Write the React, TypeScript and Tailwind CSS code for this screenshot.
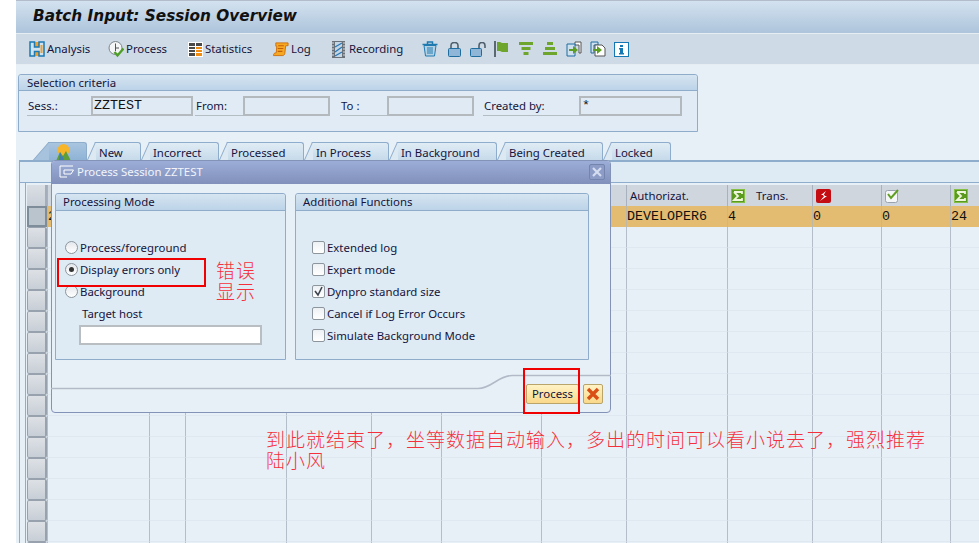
import type { ReactNode } from "react";

const columns = [
  { w: "w-[102px]" },
  { w: "w-[36px]" },
  { w: "w-[101px]" },
  { w: "w-[85px]" },
  { w: "w-[70px]" },
  { w: "w-[100px]" },
  { w: "w-[85px]" },
  { w: "w-[101px]", head: "Authorizat.", val: "DEVELOPER6" },
  { w: "w-[85px]", head: "Trans.", val: "4", icon: "sum" },
  { w: "w-[69px]", val: "0", icon: "err" },
  { w: "w-[69px]", val: "0", icon: "ok" },
  { w: "w-[40px]", val: "24", icon: "sum", clipped: true },
];

function SumIcon() {
  return (
    <svg width="14" height="14" viewBox="0 0 14 14" className="shrink-0">
      <rect x="0" y="0" width="14" height="14" fill="#5a9a1e" />
      <rect x="0.5" y="0.5" width="13" height="13" fill="none" stroke="#86bf45" />
      <path d="M3 3h8v2M3 3l4 4-4 4h8V9" fill="none" stroke="#eef6dc" strokeWidth="1.8" />
    </svg>
  );
}

function ErrIcon() {
  return (
    <svg width="15" height="14" viewBox="0 0 15 14" className="shrink-0">
      <rect width="15" height="14" rx="2" fill="#c40d12" />
      <path d="M10 2 5 6h4L4 12l7-5H7z" fill="#fff" />
    </svg>
  );
}

function OkIcon() {
  return (
    <svg width="15" height="15" viewBox="0 0 15 15" className="shrink-0">
      <rect x="0.5" y="2.5" width="12" height="12" rx="2" fill="#f4f6f8" stroke="#9aa3ad" />
      <path d="M3 6l3 4 7-8" fill="none" stroke="#5f9e22" strokeWidth="2" />
    </svg>
  );
}

function AnalysisIcon() {
  return (
    <svg width="16" height="16" viewBox="0 0 16 16" className="shrink-0">
      <rect x="1" y="1" width="14" height="14" fill="#f2a02c" />
      <path d="M1 1h4.500v5H10V1h5v14h-5v-4.500H5.500V15H1z" fill="#cfe2f0" stroke="#1b79b4" strokeWidth="1.500" />
      <path d="M11.500 4h2v8h-2z" fill="#f2a02c" />
    </svg>
  );
}

function ClockIcon() {
  return (
    <svg width="16" height="17" viewBox="0 0 16 17" className="shrink-0">
      <circle cx="7.500" cy="7" r="6.500" fill="#f3f5f7" stroke="#7d858d" />
      <path d="M7.500 2.500V7H11M7.500 7v3" fill="none" stroke="#555" />
      <path d="M6.500 11l3 3.500 6-7" fill="none" stroke="#4f9e28" strokeWidth="2.400" />
    </svg>
  );
}

function StatsIcon() {
  return (
    <svg width="15" height="15" viewBox="0 0 15 15" className="shrink-0">
      <rect width="15" height="15" fill="#fff" />
      <path d="M1 1h6v3H1zM1 5h6v2H1zM1 8h6v2H1zM1 11h6v3H1z" fill="#4a4a4a" />
      <path d="M8 1h6v3H8z" fill="#4a4a4a" />
      <path d="M8 5h6v2H8zM8 8h6v2H8zM8 11h6v3H8z" fill="#f08c10" />
    </svg>
  );
}

function LogIcon() {
  return (
    <svg width="16" height="16" viewBox="0 0 17 16" className="shrink-0">
      <path d="M3 1.500h13v3h-2.500l-1 8.500c-.5 1.500-1.500 2-2 2H.500c0-2 1-3 3-3l.500-7H3z" fill="#f7a823" stroke="#d0700a" />
      <path d="M5.500 4.500h6M5 7.500h6M5 10.500h5" stroke="#c2600a" strokeWidth="1.200" />
    </svg>
  );
}

function FilmIcon() {
  return (
    <svg width="15" height="17" viewBox="0 0 15 17" className="shrink-0">
      <rect width="13" height="17" fill="#6a7178" />
      <path d="M1 1v15M12 1v15" stroke="#d5dbe0" strokeDasharray="2 1" />
      <rect x="3" y="1" width="7" height="15" fill="#c5d6e4" />
      <path d="M3 6l7-4M3 11l7-5M3 15l7-4" stroke="#2a7ab8" strokeWidth="1.4" />
    </svg>
  );
}

function TrashIcon() {
  return (
    <svg width="16" height="16" viewBox="0 0 16 16" className="shrink-0">
      <path d="M.500 3.500h15M5.500 3V1h5v2" fill="none" stroke="#1f7ab0" strokeWidth="1.500" />
      <path d="M2 4.500h12L12.500 15h-9z" fill="#b6d0e4" stroke="#1f7ab0" />
      <path d="M6 6v7M8 6v7M10 6v7" stroke="#1f7ab0" />
    </svg>
  );
}

function LockIcon({ open }: { open?: boolean }) {
  return (
    <svg width={open ? 16 : 13} height="15" viewBox={open ? "0 0 16 15" : "0 0 13 15"} className="shrink-0">
      <path d={open ? "M9 6V3.500a3 3 0 0 1 6 0V6" : "M3 7V3.500a3.500 3 0 0 1 7 0V7"} fill="none" stroke="#4f5f6d" strokeWidth="1.600" />
      <rect x="0.500" y="6.500" width={open ? 11 : 12} height="8" rx="1" fill="#8fb6d6" stroke="#1f6d9f" />
    </svg>
  );
}

function FlagIcon() {
  return (
    <svg width="15" height="16" viewBox="0 0 15 16" className="shrink-0">
      <rect x="0" y="0" width="2" height="16" fill="#5a6a70" />
      <path d="M3 1h3l2 1h6v9H8L6 10H3z" fill="#6da52d" />
    </svg>
  );
}

function FilterIcon() {
  return (
    <svg width="14" height="14" viewBox="0 0 14 14" className="shrink-0">
      <rect x="0" y="0" width="14" height="3" fill="#6da52d" />
      <rect x="2.500" y="5" width="9" height="3" fill="#6da52d" />
      <rect x="4.500" y="10" width="5" height="3" fill="#6da52d" />
    </svg>
  );
}

function StackIcon() {
  return (
    <svg width="14" height="14" viewBox="0 0 14 14" className="shrink-0">
      <rect x="4" y="0" width="6" height="3" fill="#6da52d" />
      <rect x="2" y="5" width="10" height="3" fill="#6da52d" />
      <rect x="0" y="10" width="14" height="3" fill="#6da52d" />
    </svg>
  );
}

function TransferIcon({ flip }: { flip?: boolean }) {
  return (
    <svg width="16" height="16" viewBox="0 0 16 16" className="shrink-0">
      <path d={flip ? "M1 1h7v3H4v8H1z" : "M9 1h6v11h-2V4H9z"} fill={flip ? "#cfe0ee" : "#fff"} stroke={flip ? "#1f6d9f" : "#555"} />
      <path d={flip ? "M8 4h4l3 3v8H5V4z" : "M1 3h8v12H1z"} fill={flip ? "#fff" : "#cfe0ee"} stroke={flip ? "#555" : "#1f6d9f"} />
      <path d="M3 8h4V5l5 4-5 4v-3H3z" fill="#5d9e22" />
    </svg>
  );
}

function InfoIcon() {
  return (
    <svg width="15" height="15" viewBox="0 0 15 15" className="shrink-0">
      <rect x="0.500" y="0.500" width="14" height="14" fill="#fff" stroke="#1478b4" />
      <path d="M6 3h3v2H6zM5 6h4v5h1v1.500H5V11h1V7.500H5z" fill="#1478b4" />
    </svg>
  );
}

function MountainIcon() {
  return (
    <svg width="15" height="18" viewBox="0 0 15 18" className="shrink-0">
      <circle cx="7.500" cy="6" r="6" fill="#f7b52a" />
      <path d="M0 17 4 8l3 4 3-5 5 10z" fill="#5f9e3a" />
      <path d="M4 8l2 5 1-1 1 5H3z" fill="#3f7fae" />
    </svg>
  );
}

function CloseXIcon() {
  return (
    <svg width="14" height="14" viewBox="0 0 14 14">
      <path d="M2 2l10 10M12 2 2 12" stroke="#d94f16" strokeWidth="3.4" />
    </svg>
  );
}

function WindowIcon() {
  return (
    <svg width="15" height="13" viewBox="0 0 15 13" className="shrink-0">
      <path d="M14 1H1v11h7M14.500 5H5v4h7z" fill="none" stroke="#fff" strokeWidth="1" />
    </svg>
  );
}

const toolbarText = [
  { label: "Analysis", w: "w-[79px]", icon: <AnalysisIcon /> },
  { label: "Process", w: "w-[80px]", icon: <ClockIcon /> },
  { label: "Statistics", w: "w-[85px]", icon: <StatsIcon /> },
  { label: "Log", w: "w-[59px]", icon: <LogIcon /> },
  { label: "Recording", w: "w-[90px]", icon: <FilmIcon /> },
];

const toolbarIcons = [
  { w: "w-[26px]", icon: <TrashIcon /> },
  { w: "w-[22px]", icon: <LockIcon /> },
  { w: "w-[24px]", icon: <LockIcon open /> },
  { w: "w-[25px]", icon: <FlagIcon /> },
  { w: "w-[24px]", icon: <FilterIcon /> },
  { w: "w-[23px]", icon: <StackIcon /> },
  { w: "w-[24px]", icon: <TransferIcon /> },
  { w: "w-[24px]", icon: <TransferIcon flip /> },
  { w: "w-[24px]", icon: <InfoIcon /> },
];

const tabs = [
  { label: "New", w: "w-[54px]" },
  { label: "Incorrect", w: "w-[78px]" },
  { label: "Processed", w: "w-[85px]" },
  { label: "In Process", w: "w-[85px]" },
  { label: "In Background", w: "w-[108px]" },
  { label: "Being Created", w: "w-[106px]" },
  { label: "Locked", w: "w-[68px]" },
];

function Tab({ label, w }: { label: string; w: string }) {
  return (
    <div className={`relative h-[18px] ${w}`}>
      <div className="absolute bottom-0 left-0 top-0 w-[12px] origin-bottom-left -skew-x-[24deg] border-l border-t border-[#8eaccb] bg-[#dce9f3]" />
      <div className="absolute bottom-0 left-[9px] right-0 top-0 rounded-tr-[3px] border-r border-t border-[#8eaccb] bg-gradient-to-b from-[#e0ecf5] to-[#c6daea]" />
      <span className="absolute left-[12px] top-[5px] whitespace-nowrap text-[#14143c]">{label}</span>
    </div>
  );
}

function GroupBox({ title, className, children }: { title: string; className: string; children: ReactNode }) {
  return (
    <div className={`rounded-t-[3px] border border-[#8fadcb] bg-[#deeaf4] ${className}`}>
      <div className="flex h-[17px] items-center rounded-t-[3px] border-b border-[#8fadcb] bg-gradient-to-b from-[#d6e5f1] to-[#bcd3e8] pl-[7px] text-[#14143c]">
        {title}
      </div>
      {children}
    </div>
  );
}

function Field({ label, lw, w, value, ml }: { label: string; lw: string; w: string; value?: string; ml: string }) {
  return (
    <div className={`flex h-[20px] ${ml}`}>
      <div className={`flex items-center border-b border-[#b4bcc4] pl-[1px] pt-[1px] text-[#14143c] ${lw}`}>{label}</div>
      <div className={`flex items-center border-2 border-[#b4b9bd] bg-[#dfeaf4] pl-[1px] font-['Liberation_Mono',monospace] text-[13.33px] text-[#111] ${w}`}>
        {value}
      </div>
    </div>
  );
}

function Radio({ label, checked }: { label: string; checked?: boolean }) {
  return (
    <div className="flex h-[22px] items-center gap-[2px] pl-[9px] text-[#14143c]">
      <span className="flex h-[13px] w-[13px] items-center justify-center rounded-full border border-[#8d959d] bg-gradient-to-b from-[#e4e8ec] to-white">
        {checked && <span className="h-[5px] w-[5px] rounded-full bg-[#333]" />}
      </span>
      <span className="pt-[1px]">{label}</span>
    </div>
  );
}

function Check({ label, checked }: { label: string; checked?: boolean }) {
  return (
    <div className="flex h-[22px] items-center gap-[2px] pl-[16px] text-[#14143c]">
      <span className="flex h-[13px] w-[13px] items-center justify-center rounded-[2px] border border-[#8d959d] bg-gradient-to-b from-[#eef1f4] to-white">
        {checked && (
          <svg width="11" height="11" viewBox="0 0 11 11">
            <path d="M2 5l3 4 4-8" fill="none" stroke="#3c4450" strokeWidth="1.6" />
          </svg>
        )}
      </span>
      <span className="pt-[1px]">{label}</span>
    </div>
  );
}

function HeadIcon({ name }: { name?: string }) {
  if (name === "sum") return <SumIcon />;
  if (name === "err") return <ErrIcon />;
  if (name === "ok") return <OkIcon />;
  return null;
}

export default function App() {
  const emptyRows = Array.from({ length: 16 });

  return (
    <div className="relative flex h-[543px] w-[979px] overflow-hidden bg-white font-['Noto_Sans',sans-serif] text-[11.400px] leading-none">
      <div className="w-[16px] shrink-0" />
      <div className="flex min-w-0 flex-1 flex-col bg-[#e8f0f7]">
        {/* Title */}
        <div className="flex h-[33px] shrink-0 items-center border-t border-[#b3bccb] bg-gradient-to-b from-[#d3e2ef] to-[#adc4db] pl-[17px] font-['DejaVu_Sans',sans-serif] text-[15.300px] font-bold italic text-[#111]">
          Batch Input: Session Overview
        </div>

        {/* Toolbar */}
        <div className="flex h-[32px] shrink-0 items-center border-b border-t border-[#e6edf3] bg-[#cedbe6] pl-[13px] text-[#14143c]">
          {toolbarText.map((b) => (
            <div key={b.label} className={`flex items-center gap-[2px] ${b.w}`}>
              {b.icon}
              <span>{b.label}</span>
            </div>
          ))}
          {toolbarIcons.map((b, i) => (
            <div key={i} className={`flex items-center ${b.w}`}>
              {b.icon}
            </div>
          ))}
        </div>

        {/* Selection criteria */}
        <div className="ml-[2px] mt-[9px] h-[58px] w-[680px] shrink-0 rounded-t-[3px] border border-[#8fadcb] bg-[#e0ebf5]">
          <div className="flex h-[16px] items-center rounded-t-[3px] border-b border-[#8fadcb] bg-gradient-to-b from-[#d6e5f1] to-[#bcd3e8] pl-[8px] text-[#14143c]">
            Selection criteria
          </div>
          <div className="flex pt-[5px]">
            <Field ml="ml-[8px]" label="Sess.:" lw="w-[64px]" w="w-[102px]" value="ZZTEST" />
            <Field ml="ml-[2px]" label="From:" lw="w-[48px]" w="w-[87px]" />
            <Field ml="ml-[10px]" label="To :" lw="w-[47px]" w="w-[87px]" />
            <Field ml="ml-[9px]" label="Created by:" lw="w-[96px]" w="w-[103px]" value="*" />
          </div>
        </div>

        {/* Tab strip */}
        <div className="ml-[17px] mt-[10px] flex h-[18px] shrink-0">
          <div className="relative h-[18px] w-[54px]">
            <div className="absolute bottom-0 left-0 top-0 w-[20px] origin-bottom-left -skew-x-[41deg] border-l border-t border-[#8eaccb] bg-[#a6c2dc]" />
            <div className="absolute bottom-0 left-[16px] right-0 top-0 rounded-tr-[3px] border-r border-t border-[#8eaccb] bg-gradient-to-b from-[#a9c5df] to-[#8fb3d6]" />
            <div className="absolute left-[23px] top-[2px]">
              <MountainIcon />
            </div>
          </div>
          {tabs.map((t) => (
            <Tab key={t.label} label={t.label} w={t.w} />
          ))}
        </div>

        {/* Tab panel */}
        <div className="ml-[3px] flex min-h-0 flex-1 flex-col border-l border-t-2 border-[#8eaccb] bg-[#e8f0f7] pl-[5px]">
          <div className="ml-[-5px] h-[21px] shrink-0 border-b border-[#8eaccb] bg-[#deeaf4]" />
          <div className="flex min-h-0 flex-1 flex-col border-l border-[#8eaccb] pl-[1px] pt-[2px]">
            <div className="flex h-[21px] shrink-0">
              <div className="w-[20px] shrink-0 border-r-2 border-[#a3adbb] bg-gradient-to-b from-[#dadfe5] to-[#c9cfd7]" />
              {columns.map((c, i) => (
                <div key={i} className={`flex shrink-0 items-center gap-[11px] border-l border-[#a8b2bf] bg-[#d0d6de] pl-[3px] text-[#14143c] ${c.w}`}>
                  <HeadIcon name={c.icon} />
                  {c.head && <span>{c.head}</span>}
                  {c.clipped && <span className="h-[7px] w-[2px] shrink-0 bg-[#a01818]" />}
                </div>
              ))}
            </div>
            <div className="flex h-[21px] shrink-0">
              <div className="w-[20px] shrink-0 border-2 border-[#7f8c99] bg-[#b9c4cc]" />
              {columns.map((c, i) => (
                <div key={i} className={`flex shrink-0 items-center border-l border-[#bdb9a6] bg-[#e3bc72] font-['Liberation_Mono',monospace] text-[13.33px] text-[#111] ${c.w}`}>
                  {i === 0 ? "2" : c.val}
                </div>
              ))}
            </div>
            {emptyRows.map((_, r) => (
              <div key={r} className="flex h-[21px] shrink-0">
                <div className="w-[20px] shrink-0 rounded-[2px] border border-r-2 border-[#98a2ae] bg-gradient-to-b from-[#dde1e6] to-[#c8ced6]" />
                {columns.map((c, i) => (
                  <div key={i} className={`shrink-0 border-b border-l border-b-[#dfe8f1] border-l-[#b4bdca] ${c.w}`} />
                ))}
              </div>
            ))}
          </div>
        </div>
      </div>

      {/* Dialog */}
      <div className="absolute left-[51px] top-[160px] flex h-[253px] w-[560px] flex-col rounded-[4px] border border-[#8393b8] bg-[#e8f0f7]">
        <div className="flex h-[23px] shrink-0 items-center gap-[3px] rounded-t-[3px] bg-gradient-to-b from-[#9cadd7] to-[#8090bb] pb-[2px] pl-[7px] text-[#f2f5fb]">
          <WindowIcon />
          <span>Process Session ZZTEST</span>
          <div className="ml-auto mr-[5px] flex h-[16px] w-[16px] items-center justify-center rounded-[2px] border border-[#7384ad] bg-[#8c9cc6]">
            <svg width="10" height="10" viewBox="0 0 10 10">
              <path d="M1 1l8 8M9 1 1 9" stroke="#d5ddf0" strokeWidth="2.200" />
            </svg>
          </div>
        </div>
        <div className="flex gap-[9px] pl-[3px] pt-[9px]">
          <GroupBox title="Processing Mode" className="h-[167px] w-[231px] shrink-0">
            <div className="pt-[25px]">
              <Radio label="Process/foreground" />
              <Radio label="Display errors only" checked />
              <Radio label="Background" />
              <div className="flex h-[22px] items-center pl-[26px] pt-[1px] text-[#14143c]">Target host</div>
              <div className="ml-[23px] mt-[1px] h-[20px] w-[183px] border-2 border-[#b9bec3] bg-white" />
            </div>
          </GroupBox>
          <GroupBox title="Additional Functions" className="h-[167px] w-[294px] shrink-0">
            <div className="pt-[25px]">
              <Check label="Extended log" />
              <Check label="Expert mode" />
              <Check label="Dynpro standard size" checked />
              <Check label="Cancel if Log Error Occurs" />
              <Check label="Simulate Background Mode" />
            </div>
          </GroupBox>
        </div>
        <svg width="560" height="20" viewBox="0 0 560 20" className="absolute left-[-1px] top-[212px]">
          <path d="M0 15.500h427c14 0 20-13 34-13h99" fill="none" stroke="#b2bac8" strokeWidth="1.500" />
        </svg>
        <div className="absolute left-[474px] top-[223px] flex gap-[4px]">
          <div className="flex h-[20px] w-[53px] items-center justify-center rounded-[2px] border border-[#b9a56a] bg-gradient-to-b from-[#fff3c4] to-[#f9d98a] text-[#14143c]">
            Process
          </div>
          <div className="flex h-[20px] w-[20px] items-center justify-center rounded-[2px] border border-[#b9a56a] bg-gradient-to-b from-[#fff3c4] to-[#f9d98a]">
            <CloseXIcon />
          </div>
        </div>
      </div>

      {/* Annotations */}
      <div className="absolute left-[57px] top-[258px] h-[29px] w-[149px] border-[2px] border-[#f00000]" />
      <div className="absolute left-[523px] top-[368px] h-[46px] w-[57px] border-[2px] border-[#f00000]" />
      <div className="absolute left-[216px] top-[259px] w-[42px] font-['Noto_Sans_CJK_SC',sans-serif] text-[19px] font-light leading-[21px] tracking-[1px] text-[#f5303c]">
        错误显示
      </div>
      <div className="absolute left-[266px] top-[428px] w-[665px] font-['Noto_Sans_CJK_SC',sans-serif] text-[19px] font-light leading-[21px] tracking-[1px] text-[#f5303c]">
        到此就结束了，坐等数据自动输入，多出的时间可以看小说去了，强烈推荐陆小风
      </div>
    </div>
  );
}
